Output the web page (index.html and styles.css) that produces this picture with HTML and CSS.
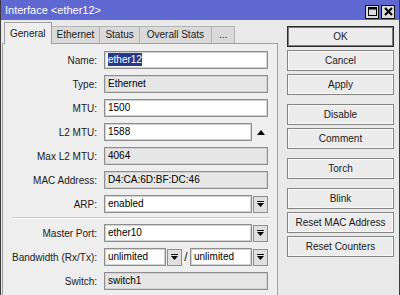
FILE: index.html
```html
<!DOCTYPE html>
<html lang="en">
<head>
    <meta charset="UTF-8">
    <title>Interface &lt;ether12&gt;</title>
    <link rel="stylesheet" href="styles.css">
</head>
<body>
    <div class="window">
        <div class="titlebar">
            <span class="title">Interface &lt;ether12&gt;</span>
            <div class="win-btns">
                <span class="win-btn"><svg width="11" height="11" viewBox="0 0 11 11"><rect x="1.5" y="1.5" width="8" height="8" fill="none" stroke="#000"/><line x1="1" y1="2.5" x2="10" y2="2.5" stroke="#000" stroke-width="2"/></svg></span>
                <span class="win-btn"><svg width="11" height="11" viewBox="0 0 11 11"><path d="M2 2 L9 9 M9 2 L2 9" stroke="#000" stroke-width="2"/></svg></span>
            </div>
        </div>
        <div class="content">
            <div class="main">
                <div class="tabs">
                    <div class="tab active">General</div>
                    <div class="tab">Ethernet</div>
                    <div class="tab">Status</div>
                    <div class="tab wide">Overall Stats</div>
                    <div class="tab wide">...</div>
                </div>
                <div class="panel">
                    <div class="row">
                        <span class="label">Name:</span>
                        <span class="input"><span class="sel">ether12</span></span>
                    </div>
                    <div class="row">
                        <span class="label">Type:</span>
                        <span class="input ro">Ethernet</span>
                    </div>
                    <div class="row">
                        <span class="label">MTU:</span>
                        <span class="input">1500</span>
                    </div>
                    <div class="row">
                        <span class="label">L2 MTU:</span>
                        <span class="input short">1588</span>
                        <span class="arrow-up"></span>
                    </div>
                    <div class="row">
                        <span class="label">Max L2 MTU:</span>
                        <span class="input ro">4064</span>
                    </div>
                    <div class="row">
                        <span class="label">MAC Address:</span>
                        <span class="input ro">D4:CA:6D:BF:DC:46</span>
                    </div>
                    <div class="row">
                        <span class="label">ARP:</span>
                        <span class="input short">enabled</span>
                        <span class="drop"><svg width="9" height="8" viewBox="0 0 9 8"><rect x="1" y="1" width="7" height="1" fill="#000"/><path d="M1 3 H8 L4.5 7 Z" fill="#000"/></svg></span>
                    </div>
                    <div class="sep"></div>
                    <div class="row">
                        <span class="label">Master Port:</span>
                        <span class="input short">ether10</span>
                        <span class="drop"><svg width="9" height="8" viewBox="0 0 9 8"><rect x="1" y="1" width="7" height="1" fill="#000"/><path d="M1 3 H8 L4.5 7 Z" fill="#000"/></svg></span>
                    </div>
                    <div class="row">
                        <span class="label">Bandwidth (Rx/Tx):</span>
                        <span class="input half">unlimited</span>
                        <span class="drop"><svg width="9" height="8" viewBox="0 0 9 8"><rect x="1" y="1" width="7" height="1" fill="#000"/><path d="M1 3 H8 L4.5 7 Z" fill="#000"/></svg></span>
                        <span class="slash">/</span>
                        <span class="input half">unlimited</span>
                        <span class="drop"><svg width="9" height="8" viewBox="0 0 9 8"><rect x="1" y="1" width="7" height="1" fill="#000"/><path d="M1 3 H8 L4.5 7 Z" fill="#000"/></svg></span>
                    </div>
                    <div class="row">
                        <span class="label">Switch:</span>
                        <span class="input ro">switch1</span>
                    </div>
                </div>
            </div>
            <div class="side">
                <div class="group">
                    <button class="default">OK</button>
                    <button>Cancel</button>
                    <button>Apply</button>
                </div>
                <div class="group">
                    <button>Disable</button>
                    <button>Comment</button>
                </div>
                <div class="group">
                    <button>Torch</button>
                </div>
                <div class="group">
                    <button>Blink</button>
                    <button>Reset MAC Address</button>
                    <button>Reset Counters</button>
                </div>
            </div>
        </div>
    </div>
</body>
</html>
```

FILE: styles.css
```css
body {
    margin: 0;
    font-family: "Liberation Sans", Arial, sans-serif;
    font-size: 10px;
    color: #1a1a1a;
    background: #e9e9e9;
}
.window {
    width: 400px;
    height: 295px;
    box-sizing: border-box;
    border-left: 1px solid #3c3c3c;
    border-right: 1px solid #3c3c3c;
    background: #e9e9e9;
    overflow: hidden;
}
.titlebar {
    height: 20px;
    background: #5e68d0;
    display: flex;
    align-items: center;
    justify-content: space-between;
    padding: 0 4px 0 4px;
}
.title {
    color: white;
    font-size: 11px;
}
.win-btns {
    display: flex;
    gap: 2px;
    margin-top: 3px;
}
.win-btn {
    width: 12px;
    height: 12px;
    border: 1px solid #111;
    background: #dcdcdc;
    display: flex;
    align-items: center;
    justify-content: center;
}
.content {
    display: flex;
}
.main {
    width: 276px;
    margin-left: 1px;
}
.tabs {
    display: flex;
    align-items: flex-end;
    height: 21px;
    padding: 2px 0 0 2px;
    position: relative;
    z-index: 1;
}
.tab {
    height: 17px;
    line-height: 16px;
    padding: 0 5px;
    background: #dadada;
    border: 1px solid #b4b4b4;
    border-bottom: none;
    border-left: none;
    box-sizing: border-box;
}
.tab.wide {
    padding: 0 7px;
}
.tab.active {
    height: 22px;
    line-height: 22px;
    background: #eeeeee;
    border: 1px solid #a0a0a0;
    border-bottom: none;
    margin-bottom: -1px;
    padding: 0 5px;
}
.panel {
    height: 260px;
    border: 1px solid #a0a0a0;
    background: #eeeeee;
    padding-top: 7px;
    box-sizing: border-box;
}
.row {
    display: flex;
    align-items: center;
    height: 18px;
    margin-bottom: 6px;
}
.label {
    width: 94px;
    text-align: right;
    margin-right: 7px;
}
.input {
    width: 164px;
    height: 18px;
    box-sizing: border-box;
    border: 1px solid #8e8e8e;
    box-shadow: inset 0 0 0 1px #d2d2d2;
    background: white;
    padding-left: 3px;
    line-height: 16px;
    white-space: nowrap;
    color: #000;
}
.input.ro {
    background: #e6e6e6;
}
.input.short {
    width: 148px;
}
.input.half {
    width: 62px;
}
.sel {
    background: #26398e;
    color: white;
    padding: 1px 0;
}
.drop {
    width: 15px;
    height: 17px;
    box-sizing: border-box;
    margin-left: 1px;
    border: 1px solid #8e8e8e;
    background: #e0e0e0;
    display: flex;
    align-items: center;
    justify-content: center;
}
.slash {
    width: 8px;
    text-align: center;
    font-size: 12px;
}
.arrow-up {
    width: 0;
    height: 0;
    margin-left: 5px;
    border-left: 4px solid transparent;
    border-right: 4px solid transparent;
    border-bottom: 5px solid #000;
}
.sep {
    height: 0;
    margin: -2px 6px 5px 9px;
    border-top: 1px solid #cdcdcd;
    border-bottom: 1px solid #fafafa;
}
.side {
    width: 107px;
    margin-left: 9px;
    padding-top: 6px;
    display: flex;
    flex-direction: column;
    gap: 9px;
}
.group {
    display: flex;
    flex-direction: column;
    gap: 3px;
}
button {
    height: 21px;
    font-family: "Liberation Sans", Arial, sans-serif;
    font-size: 10px;
    color: #1a1a1a;
    background: #ececec;
    border: 1px solid #858585;
    box-shadow: inset 0 0 0 1px #f8f8f8;
    padding: 0;
}
button.default {
    border-color: #2a2a2a;
    box-shadow: inset 0 0 0 1px #7c7c7c;
}
```
